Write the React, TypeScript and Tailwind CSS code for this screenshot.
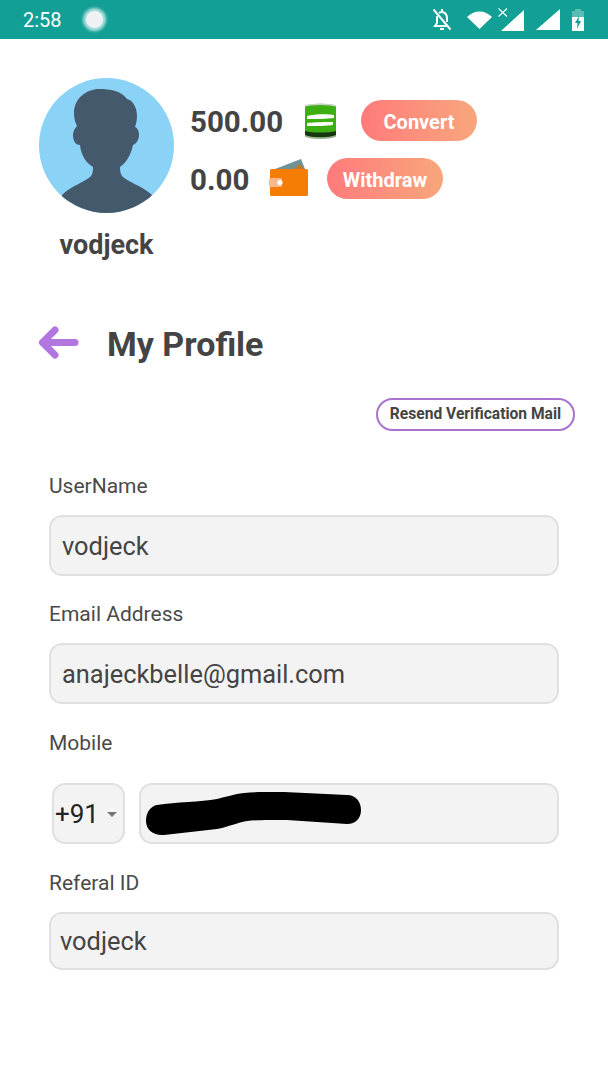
import React from 'react';

const FONT = { fontFamily: 'Roboto, sans-serif' };

function StatusIcons() {
  return (
    <div className="flex items-center text-white">
      {/* muted bell */}
      <svg width="20" height="23" viewBox="0 0 20 23" className="mr-[15px]" fill="none" stroke="white" strokeWidth="2">
        <path d="M5 8 V15 L3 18 H15" />
        <path d="M7 5 C10 3 15 4.5 15 10 V14" />
        <path d="M8 21 H12" />
        <path d="M10 1 V3.5" />
        <path d="M1.5 1.5 L18.5 21.5" />
      </svg>
      <svg width="25" height="18" viewBox="0 0 25 18" className="mr-[6px]">
        <path d="M0 6 C7 -1.5 18 -1.5 25 6 L12.5 18 Z" fill="white" />
      </svg>
      <svg width="26" height="24" viewBox="0 0 26 24" className="mr-[12px]">
        <path d="M3 23 L26 2 V23 Z" fill="white" />
        <path d="M0.5 0.5 L9 8.5 M9 0.5 L0.5 8.5" stroke="white" strokeWidth="1.1" />
      </svg>
      <svg width="24" height="22" viewBox="0 0 24 22" className="mr-[12px]">
        <path d="M0 21 L24 0 V21 Z" fill="white" />
      </svg>
      <svg width="12" height="22" viewBox="0 0 12 22">
        <path d="M3 0 H9 V2 H12 V22 H0 V2 H3 Z" fill="white" fillOpacity="0.3" />
        <path d="M0 8 H12 V22 H0 Z" fill="white" />
        <path d="M7 7 L3 14 H5.5 L5 20 L9 12 H6.5 Z" fill="#129f95" />
      </svg>
    </div>
  );
}

function Avatar() {
  return (
    <svg width="135" height="135" viewBox="0 0 135 135" className="block">
      <defs>
        <clipPath id="avatar-clip">
          <circle cx="67.5" cy="67.5" r="67.5" />
        </clipPath>
      </defs>
      <circle cx="67.5" cy="67.5" r="67.5" fill="#8AD2F6" />
      <g clipPath="url(#avatar-clip)" fill="#445A6C">
        <path d="M23 117 C32 108 46 104 52 98 C54 95 54 92 54 89 C47 85 42 77 41 67 C36 67 34 62 34 57 C34 53 36 50 38 48 C36 44 35 40 35 35 C35 20 48 11 60 11 C72 11 82 13 88 21 C94 22 98 30 98 38 C98 42 97 46 96 49 C99 50 100 54 100 57 C100 62 97 66 94 67 C92 77 87 85 81 89 C81 92 81 95 83 98 C89 104 103 108 113 117 L113 135 L23 135 Z" />
      </g>
    </svg>
  );
}

function CoinsIcon() {
  return (
    <svg width="33" height="36" viewBox="0 0 33 36">
      <path d="M1 3 C8 0 25 0 32 3 V33 C25 36 8 36 1 33 Z" fill="#3EAF12" />
      <path d="M1 3 C8 0.5 25 0.5 32 3" stroke="#c9d2c6" strokeWidth="1.5" fill="none" />
      <path d="M3 13 C10 11 24 11 30 12 V15 C24 16 10 16 3 16 Z" fill="#ffffff" />
      <path d="M3 20 C10 19 24 19 29 19 V22 C24 23 10 23 3 23 Z" fill="#ffffff" />
      <path d="M1 28 C8 30 25 30 32 28 V32 C25 35 8 35 1 32 Z" fill="#17350f" />
      <path d="M1 33 C8 36 25 36 32 33" stroke="#a9b1a7" strokeWidth="1.5" fill="none" />
    </svg>
  );
}

function WalletIcon() {
  return (
    <svg width="40" height="37" viewBox="0 0 40 37">
      <path d="M6 10 L32 0 L36 10 Z" fill="#6F9396" />
      <path d="M25 10 L31 5 L34 10 Z" fill="#C5771F" />
      <rect x="1" y="10" width="38" height="27" rx="1.5" fill="#F57C05" />
      <rect x="0" y="19" width="13" height="9" rx="1.5" fill="#F9B98A" />
      <circle cx="11" cy="23.5" r="2.6" fill="#ffffff" />
    </svg>
  );
}

function GradientButton({ label, className }: { label: string; className: string }) {
  return (
    <div className={`flex h-[41px] items-center justify-center rounded-full bg-gradient-to-r from-[#FE7A7B] to-[#F8A67C] pt-[2px] text-[20px] font-bold text-white ${className}`}>
      {label}
    </div>
  );
}

function Field({ label, value }: { label: string; value: string }) {
  return (
    <div>
      <div className="text-[21px] leading-[24px] text-[#4a4a4a]">{label}</div>
      <div className="mt-[17px] flex h-[61px] items-center rounded-[13px] border-2 border-[#e0e0e0] bg-[#f3f3f3] px-[11px] pt-[2px] text-[25.4px] text-[#444444]">
        {value}
      </div>
    </div>
  );
}

export default function App() {
  return (
    <div className="h-[1080px] w-[608px] overflow-hidden bg-white" style={FONT}>
      {/* status bar */}
      <div className="flex h-[39px] items-center justify-between bg-[#129f95] pl-[23px] pr-[24px]">
        <div className="flex items-center">
          <span className="text-[20px] text-white">2:58</span>
          <div className="ml-[24px] h-[17px] w-[17px] rounded-full bg-[#eef2f2] shadow-[0_0_3px_3px_rgba(215,240,240,0.8)]" />
        </div>
        <StatusIcons />
      </div>

      {/* profile header */}
      <div className="mt-[39px] flex pl-[39px]">
        <div className="flex w-[135px] flex-col items-center">
          <Avatar />
          <div className="mt-[15px] text-[27px] font-bold leading-[34px] text-[#444444]">vodjeck</div>
        </div>
        <div className="ml-[17px] flex flex-col pt-[22px]">
          <div className="flex h-[41px] items-center">
            <span className="-ml-[1px] w-[93px] pt-[3px] text-[29.5px] font-bold text-[#444444]">500.00</span>
            <div className="ml-[21px]"><CoinsIcon /></div>
            <GradientButton label="Convert" className="ml-[24px] w-[116px]" />
          </div>
          <div className="mt-[17px] flex h-[41px] items-center">
            <span className="-ml-[1px] w-[59px] pt-[3px] text-[29.5px] font-bold text-[#444444]">0.00</span>
            <div className="-mt-[2px] ml-[20px]"><WalletIcon /></div>
            <GradientButton label="Withdraw" className="ml-[18px] w-[116px]" />
          </div>
        </div>
      </div>

      {/* title */}
      <div className="mt-[62px] flex items-center pl-[38px]">
        <svg width="41" height="33" viewBox="0 0 41 33" fill="none" stroke="#B177DF" strokeWidth="7" strokeLinecap="round" strokeLinejoin="round" className="mb-[4px]">
          <path d="M37 16.5 H5" />
          <path d="M17 4 L4.5 16.5 L17 29" />
        </svg>
        <div className="ml-[28px] text-[34px] font-bold leading-[40px] text-[#444444]">My Profile</div>
      </div>

      <div className="mt-[34px] flex justify-end pr-[33px]">
        <div className="flex h-[33px] w-[199px] items-center justify-center rounded-full border-2 border-[#A873CF] pt-[1px] text-[15.6px] font-bold text-[#444444]">
          Resend Verification Mail
        </div>
      </div>

      {/* form */}
      <div className="mt-[43px] flex flex-col gap-[26px] pl-[49px] pr-[49px]">
        <Field label="UserName" value="vodjeck" />
        <Field label="Email Address" value="anajeckbelle@gmail.com" />
        <div className="mt-[1px]">
          <div className="text-[21px] leading-[24px] text-[#4a4a4a]">Mobile</div>
          <div className="mt-[28px] flex pl-[3px]">
            <div className="flex h-[61px] w-[73px] items-center rounded-[13px] border-2 border-[#e0e0e0] bg-[#f3f3f3] pl-[1px] pt-[2px] text-[26px] text-[#222222]">
              +91
              <svg width="10" height="5" viewBox="0 0 10 5" className="ml-[8px]">
                <path d="M0 0 H10 L5 5 Z" fill="#777777" />
              </svg>
            </div>
            <div className="relative ml-[14px] h-[61px] flex-1 rounded-[13px] border-2 border-[#e0e0e0] bg-[#f3f3f3]">
              <svg width="215" height="44" viewBox="0 0 215 44" className="absolute left-[5px] top-[7px]">
                <path d="M11 13 C30 10 55 10 71 7 C80 5 88 2 98 1 C115 -0.5 130 0 138 0 L201 3 C210 3 215 10 215 18 C215 26 210 32 201 32 L141 28 C125 28 110 28 101 29 C90 31 82 35 71 37 L18 43 C8 44 0 38 0 29 C0 20 5 14 11 13 Z" fill="#000000" />
              </svg>
            </div>
          </div>
        </div>
        <div className="mt-[1px]">
          <div className="text-[21px] leading-[24px] text-[#4a4a4a]">Referal ID</div>
          <div className="mt-[17px] flex h-[58px] items-center rounded-[13px] border-2 border-[#e0e0e0] bg-[#f3f3f3] px-[9px] text-[25.4px] text-[#444444]">
            vodjeck
          </div>
        </div>
      </div>
    </div>
  );
}
